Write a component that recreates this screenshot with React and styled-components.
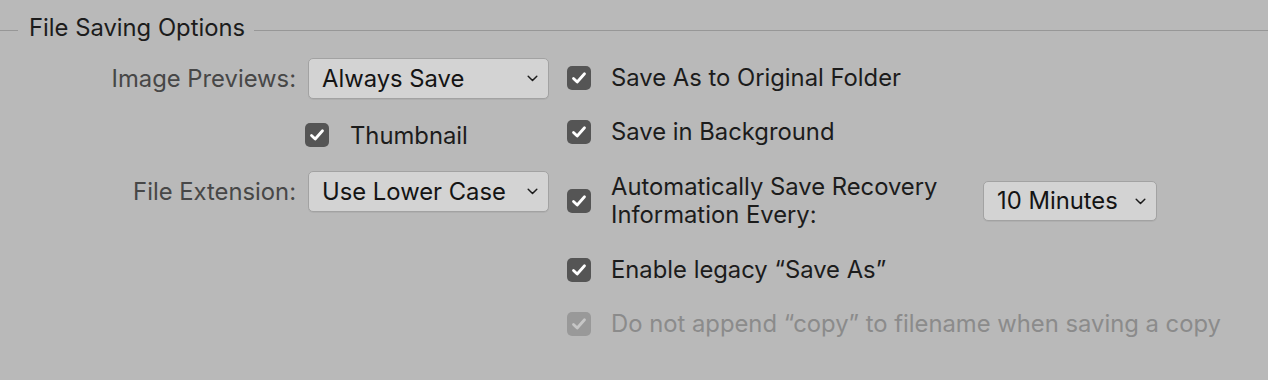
import React from "react";
import styled, { createGlobalStyle } from "styled-components";

const Global = createGlobalStyle`
  html, body { margin: 0; padding: 0; background: #b9b9b9; }
  body { font-family: Inter, "Liberation Sans", sans-serif; -webkit-font-smoothing: antialiased; }
  * { box-sizing: border-box; }
`;

const Panel = styled.div`
  width: 1268px;
  height: 380px;
  background: #b9b9b9;
  color: #1c1c1c;
  font-size: 23.8px;
  overflow: hidden;
`;

const Legend = styled.div`
  display: flex;
  align-items: center;
  height: 58px;
  padding-bottom: 2px;
  &::before, &::after {
    content: "";
    height: 1px;
    background: #979797;
    margin-top: 4px;
  }
  &::before { width: 18px; }
  &::after { flex: 1; }
`;

const LegendText = styled.span`
  padding: 0 9px 0 11px;
  line-height: 28px;
  color: #1c1c1c;
`;

const Body = styled.div`
  display: flex;
  gap: 18px;
`;

const LeftCol = styled.div`
  display: grid;
  grid-template-columns: 296px 241px;
  column-gap: 12px;
  row-gap: 21px;
  align-items: center;
  align-content: start;
`;

const FieldLabel = styled.span`
  text-align: right;
  color: #474747;
  line-height: 28px;
`;

const SelectBox = styled.div`
  display: flex;
  align-items: center;
  justify-content: space-between;
  width: ${p => p.$w}px;
  height: ${p => p.$h || 41}px;
  padding: 0 10px 0 13px;
  background: #d3d3d3;
  border: 1px solid #a2a2a2;
  border-radius: 5px;
  box-shadow: 0 1px 0 rgba(0,0,0,0.05);
  color: #141414;
  line-height: 28px;
`;

const ThumbRow = styled.div`
  grid-column: 2;
  display: flex;
  align-items: center;
  gap: 21px;
  height: 30px;
  margin-left: -3px;
`;

const RightCol = styled.div`
  display: flex;
  flex-direction: column;
  gap: 25px;
  padding-top: 5px;
`;

const Row = styled.div`
  display: flex;
  align-items: center;
  min-height: 30px;
  gap: 20px;
  color: ${p => (p.$disabled ? "#8b8b8b" : "#1c1c1c")};
  line-height: 28px;
  margin-top: ${p => p.$mt || 0}px;
`;

const RowText = styled.span`
  width: ${p => (p.$w ? `${p.$w}px` : "auto")};
  white-space: ${p => (p.$w ? "normal" : "nowrap")};
`;

const BoxEl = styled.span`
  flex: none;
  width: 24px;
  height: 24px;
  border-radius: 5px;
  background: ${p => (p.$disabled ? "#999999" : "#555555")};
  display: flex;
  align-items: center;
  justify-content: center;
`;

const Check = ({ disabled }) => (
  <BoxEl $disabled={disabled}>
    <svg width="16" height="14" viewBox="0 0 16 14">
      <path
        d="M2.5 7.5 L6.2 11 L13.5 2.8"
        fill="none"
        stroke={disabled ? "#c6c6c6" : "#ffffff"}
        strokeWidth="2.8"
        strokeLinecap="round"
        strokeLinejoin="round"
      />
    </svg>
  </BoxEl>
);

const Chevron = () => (
  <svg width="11" height="7" viewBox="0 0 11 7">
    <path d="M1.2 1.3 L5.5 5.5 L9.8 1.3" fill="none" stroke="#1c1c1c" strokeWidth="1.5" strokeLinecap="round" strokeLinejoin="round" />
  </svg>
);

const Select = ({ value, w, h }) => (
  <SelectBox $w={w} $h={h}>
    <span>{value}</span>
    <Chevron />
  </SelectBox>
);

export default function App() {
  return (
    <Panel>
      <Global />
      <Legend>
        <LegendText>File Saving Options</LegendText>
      </Legend>
      <Body>
        <LeftCol>
          <FieldLabel>Image Previews:</FieldLabel>
          <Select value="Always Save" w={241} />
          <ThumbRow>
            <Check />
            <span>Thumbnail</span>
          </ThumbRow>
          <FieldLabel>File Extension:</FieldLabel>
          <Select value="Use Lower Case" w={241} />
        </LeftCol>
        <RightCol>
          <Row>
            <Check />
            <RowText>Save As to Original Folder</RowText>
          </Row>
          <Row $mt={-1}>
            <Check />
            <RowText>Save in Background</RowText>
          </Row>
          <Row $mt={1}>
            <Check />
            <RowText $w={352}>Automatically Save Recovery Information Every:</RowText>
            <Select value="10 Minutes" w={174} h={40} />
          </Row>
          <Row $mt={1}>
            <Check />
            <RowText>Enable legacy “Save As”</RowText>
          </Row>
          <Row $disabled $mt={-1}>
            <Check disabled />
            <RowText>Do not append “copy” to filename when saving a copy</RowText>
          </Row>
        </RightCol>
      </Body>
    </Panel>
  );
}
